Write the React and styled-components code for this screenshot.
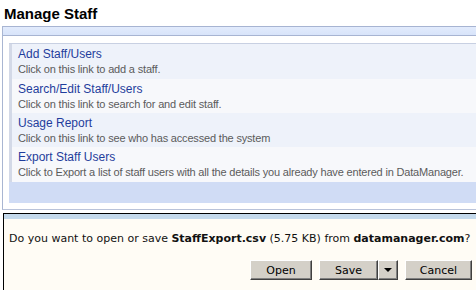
import React from "react";
import styled, { createGlobalStyle } from "styled-components";

const Global = createGlobalStyle`
  html, body { margin: 0; padding: 0; background: #fff; overflow: hidden; }
  body { font-family: "Liberation Sans", Arial, sans-serif; width: 476px; height: 290px; }
`;

const Page = styled.div`
  width: 476px;
  height: 290px;
  overflow: hidden;
  display: flex;
  flex-direction: column;
`;

const Title = styled.h1`
  margin: 0;
  padding: 5px 0 0 4px;
  height: 21px;
  font-size: 15px;
  line-height: 18px;
  font-weight: bold;
  color: #000;
`;

const Panel = styled.div`
  margin-left: 2px;
  width: 490px;
  border-left: 1px solid #a9b6d2;
  border-bottom: 1px solid #b9c3da;
  display: flex;
  flex-direction: column;
`;

const PanelHeader = styled.div`
  height: 8px;
  border-top: 1px solid #a7b4d2;
  border-bottom: 1px solid #a7b4d2;
  background: linear-gradient(#e2ebfc, #d8e4fa);
`;

const PanelBody = styled.div`
  padding: 7px 0 6px 6px;
`;

const Inner = styled.div`
  border-top: 1px solid #c8d0e2;
  display: flex;
  flex-direction: column;
`;

const Row = styled.div`
  height: ${(p) => p.$h}px;
  box-sizing: border-box;
  border-left: 3px solid #d3d9e7;
  background: ${(p) => (p.$alt ? "#f7f8fb" : "#eef2fa")};
  padding: 2px 0 0 6px;
`;

const LinkTitle = styled.div`
  font-size: 12px;
  line-height: 16px;
  color: #1f3d9c;
`;

const Desc = styled.div`
  font-size: 11px;
  line-height: 14px;
  letter-spacing: -0.18px;
  white-space: nowrap;
  color: #5b5b5b;
`;

const Footer = styled.div`
  height: 21px;
  background: #d0dcf5;
`;

const Dialog = styled.div`
  margin: 3px 0 0 3px;
  flex: 1;
  border-top: 1px solid #000;
  border-left: 1px solid #000;
  background: #fffcf5;
  display: flex;
  flex-direction: column;
  font-family: "DejaVu Sans", Tahoma, sans-serif;
  font-size: 11px;
  color: #111;
`;

const DialogBand = styled.div`
  height: 5px;
  background: #c4d9eb;
`;

const Message = styled.div`
  padding: 13px 0 0 5px;
  height: 28px;
  line-height: 14px;
  white-space: nowrap;
  b { font-weight: bold; }
`;

const Buttons = styled.div`
  display: flex;
  justify-content: flex-end;
  gap: 7px;
  padding-right: 4px;
`;

const Btn = styled.div`
  box-sizing: border-box;
  width: ${(p) => p.$w}px;
  height: 20px;
  background: #d4d0c8;
  border-top: 1px solid #fff;
  border-left: 1px solid #fff;
  border-right: 1px solid #404040;
  border-bottom: 1px solid #404040;
  box-shadow: inset -1px -1px 0 #808080;
  display: flex;
  align-items: center;
  justify-content: center;
  font-size: 11px;
  color: #000;
`;

const Split = styled.div`
  display: flex;
`;

const Arrow = styled.span`
  width: 0;
  height: 0;
  border-left: 4px solid transparent;
  border-right: 4px solid transparent;
  border-top: 4px solid #000;
`;

const rows = [
  ["Add Staff/Users", "Click on this link to add a staff.", 35],
  ["Search/Edit Staff/Users", "Click on this link to search for and edit staff.", 34],
  ["Usage Report", "Click on this link to see who has accessed the system", 34],
  ["Export Staff Users", "Click to Export a list of staff users with all the details you already have entered in DataManager.", 35],
];

export default function App() {
  return (
    <Page>
      <Global />
      <Title>Manage Staff</Title>
      <Panel>
        <PanelHeader />
        <PanelBody>
          <Inner>
            {rows.map(([t, d, h], i) => (
              <Row key={t} $alt={i % 2 === 1} $h={h}>
                <LinkTitle>{t}</LinkTitle>
                <Desc>{d}</Desc>
              </Row>
            ))}
            <Footer />
          </Inner>
        </PanelBody>
      </Panel>
      <Dialog>
        <DialogBand />
        <Message>
          Do you want to open or save <b>StaffExport.csv</b> (5.75 KB) from <b>datamanager.com</b>?
        </Message>
        <Buttons>
          <Btn $w={62}>Open</Btn>
          <Split>
            <Btn $w={59}>Save</Btn>
            <Btn $w={20}><Arrow /></Btn>
          </Split>
          <Btn $w={67}>Cancel</Btn>
        </Buttons>
      </Dialog>
    </Page>
  );
}
